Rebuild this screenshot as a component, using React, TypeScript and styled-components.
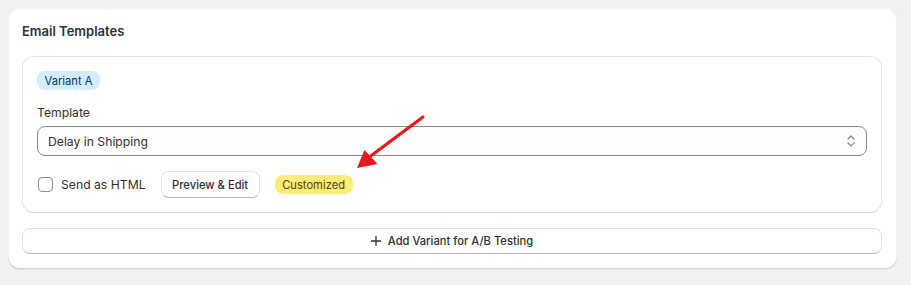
import React, { useState } from "react";
import styled, { createGlobalStyle } from "styled-components";

const GlobalStyle = createGlobalStyle`
    html, body {
        margin: 0;
        padding: 0;
        background: #f1f1f1;
    }
    body {
        font-family: Inter, "Noto Sans", "Liberation Sans", sans-serif;
        color: #303030;
        -webkit-font-smoothing: antialiased;
    }
`;

const Page = styled.div`
    position: relative;
    padding: 8px;
`;

const Card = styled.section`
    width: 889px;
    box-sizing: border-box;
    background: #fff;
    border-radius: 12px;
    padding: 13px 15px 15px 14px;
    display: flex;
    flex-direction: column;
    gap: 15px;
    box-shadow:
        0 1px 0 0 rgba(26, 26, 26, 0.07),
        inset 0 -1px 0 0 rgba(0, 0, 0, 0.12),
        inset 0 0 0 1px rgba(0, 0, 0, 0.05);
`;

const Title = styled.h2`
    margin: 0;
    font-size: 13px;
    line-height: 20px;
    font-weight: 600;
    color: #303030;
`;

const Variant = styled.div`
    border: 1px solid #e3e3e3;
    border-bottom-color: #d4d4d4;
    border-radius: 12px;
    padding: 14px;
    display: flex;
    flex-direction: column;
    align-items: flex-start;
`;

const Badge = styled.span<{ $tone: "info" | "attention" }>`
    display: inline-flex;
    align-items: center;
    height: 19px;
    padding: 0 7.5px;
    border-radius: 8px;
    font-size: 11.2px;
    font-weight: 400;
    background: ${p => (p.$tone === "info" ? "#d5ebff" : "#ffeb78")};
    color: ${p => (p.$tone === "info" ? "#003a5a" : "#4f4700")};
`;

const Field = styled.div`
    margin-top: 13px;
    width: 100%;
    display: flex;
    flex-direction: column;
    gap: 4px;
`;

const Label = styled.label`
    font-size: 12.2px;
    line-height: 19px;
    color: #303030;
`;

const SelectBox = styled.div`
    height: 30px;
    box-sizing: border-box;
    border: 1px solid #8a8a8a;
    border-radius: 8px;
    background: #fdfdfd;
    display: flex;
    align-items: center;
    justify-content: space-between;
    padding: 0 10px 0 10px;
    font-size: 12.2px;
    color: #303030;

    & svg {
        color: #8a8a8a;
    }
`;

const Row = styled.div`
    margin-top: 15px;
    display: flex;
    align-items: center;
`;

const CheckLabel = styled.label`
    display: flex;
    align-items: center;
    gap: 8px;
    font-size: 12.2px;
    color: #303030;
    margin-left: 1px;
    margin-right: 15px;
    cursor: pointer;
`;

const Box = styled.span<{ $checked: boolean }>`
    width: 15px;
    height: 15px;
    box-sizing: border-box;
    border: 1px solid #8a8a8a;
    border-radius: 4px;
    background: ${p => (p.$checked ? "#303030" : "#fff")};
`;

const Button = styled.button<{ $full?: boolean }>`
    height: ${p => (p.$full ? "26px" : "27px")};
    width: ${p => (p.$full ? "100%" : "auto")};
    padding: 0 10.5px;
    box-sizing: border-box;
    border: 1px solid #e3e3e3;
    border-bottom-color: #b5b5b5;
    border-radius: 8px;
    background: #fff;
    font-family: inherit;
    font-size: 11.2px;
    font-weight: 500;
    color: #303030;
    display: inline-flex;
    align-items: center;
    justify-content: center;
    gap: 7px;
    margin-right: ${p => (p.$full ? "0" : "15px")};
    cursor: pointer;
`;

const Annotation = styled.svg`
    position: absolute;
    left: 0;
    top: 0;
    pointer-events: none;
`;

function Chevrons() {
    return (
        <svg width="10" height="14" viewBox="0 0 10 14" fill="none" stroke="currentColor" strokeWidth="1.4" strokeLinecap="round" strokeLinejoin="round">
            <path d="M2 5 L5 2 L8 5" />
            <path d="M2 9 L5 12 L8 9" />
        </svg>
    );
}

function Plus() {
    return (
        <svg width="10" height="10" viewBox="0 0 10 10" stroke="#303030" strokeWidth="1.3" strokeLinecap="round">
            <path d="M5 0.5 V9.5 M0.5 5 H9.5" />
        </svg>
    );
}

export default function App() {
    const [html, setHtml] = useState(false);

    return (
        <Page>
            <GlobalStyle />
            <Card>
                <Title>Email Templates</Title>
                <Variant>
                    <Badge $tone="info">Variant A</Badge>
                    <Field>
                        <Label>Template</Label>
                        <SelectBox>
                            <span>Delay in Shipping</span>
                            <Chevrons />
                        </SelectBox>
                    </Field>
                    <Row>
                        <CheckLabel onClick={() => setHtml(!html)}>
                            <Box $checked={html} />
                            Send as HTML
                        </CheckLabel>
                        <Button>Preview &amp; Edit</Button>
                        <Badge $tone="attention">Customized</Badge>
                    </Row>
                </Variant>
                <Button $full>
                    <Plus />
                    Add Variant for A/B Testing
                </Button>
            </Card>
            <Annotation width="911" height="285" viewBox="0 0 911 285">
                <line x1="423" y1="117" x2="368" y2="158" stroke="#e8191c" strokeWidth="3.2" strokeLinecap="round" />
                <polygon points="357,168 364.5,150 377.5,164" fill="#e8191c" />
            </Annotation>
        </Page>
    );
}
